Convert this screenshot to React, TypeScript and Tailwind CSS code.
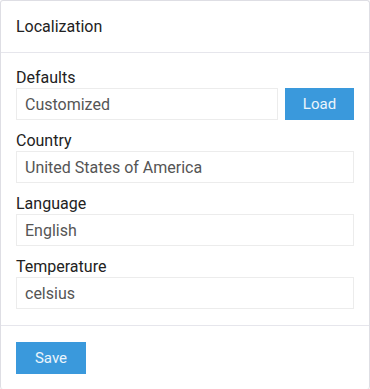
import { useState } from 'react'

function Field({ label, value, children }: { label: string; value: string; children?: React.ReactNode }) {
  return (
    <div className="mb-[11px]">
      <label className="block h-[20px] text-[16px] leading-[20px] text-[#222]">{label}</label>
      <div className="flex gap-[7px]">
        <input
          readOnly
          value={value}
          className="h-[32px] min-w-0 flex-1 border border-[#ececec] bg-white px-2 text-[16px] text-[#555] outline-none"
        />
        {children}
      </div>
    </div>
  )
}

export default function App() {
  const [defaults] = useState('Customized')

  return (
    <div className="h-[389px] w-[370px] bg-white font-['Roboto',sans-serif]">
      <div className="h-full rounded-[3px] border border-[#dedee4] border-b-0 shadow-[0_1px_2px_rgba(0,0,0,0.08)]">
        {/* Header */}
        <div className="flex h-[52px] items-center border-b border-[#e6e6ec] px-[15px] pt-[1px] text-[16px] text-[#222]">
          Localization
        </div>

        {/* Form body */}
        <div className="border-b border-[#e6e6ec] px-[15px] pb-[5px] pt-[15px]">
          <Field label="Defaults" value={defaults}>
            <button className="h-[32px] w-[69px] bg-[#3a99dc] text-[15px] text-white/90">Load</button>
          </Field>
          <Field label="Country" value="United States of America" />
          <Field label="Language" value="English" />
          <Field label="Temperature" value="celsius" />
        </div>

        {/* Footer */}
        <div className="px-[15px] pt-[16px]">
          <button className="h-[32px] w-[70px] bg-[#3a99dc] text-[15px] text-white/90">Save</button>
        </div>
      </div>
    </div>
  )
}
